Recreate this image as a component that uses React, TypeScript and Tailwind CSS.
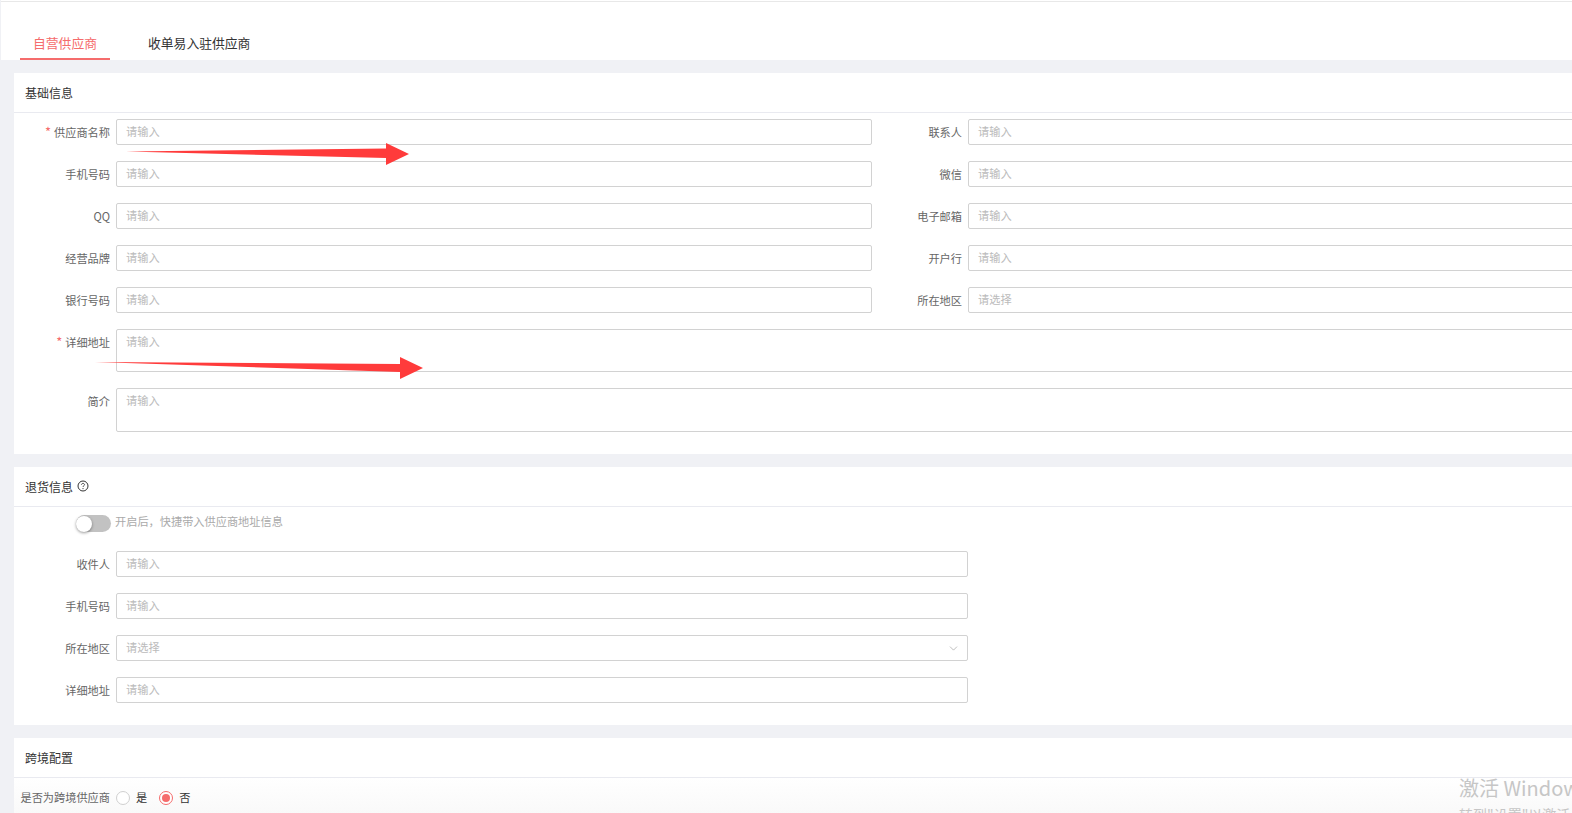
import { ChevronDown } from "lucide-react";

const font = { fontFamily: '"Noto Sans CJK SC", "Noto Sans", sans-serif' };

function Field({
  label,
  required,
  placeholder = "请输入",
  labelWidth = "w-[96px]",
  inputWidth = "w-[756px]",
  tall,
  chevron,
}: {
  label: string;
  required?: boolean;
  placeholder?: string;
  labelWidth?: string;
  inputWidth?: string;
  tall?: string;
  chevron?: boolean;
}) {
  return (
    <div className="flex items-start gap-[6px]">
      <label
        className={`${labelWidth} shrink-0 text-right text-[11.2px] leading-[26px] text-[#666]`}
      >
        {required && <span className="mr-[3px] text-[13px] text-[#f56c6c]">*</span>}
        {label}
      </label>
      <div
        className={`${inputWidth} ${tall ?? "h-[26px]"} flex items-start justify-between rounded-[2px] border border-[#d2d2d2] bg-white pl-[9px] pr-[7px] text-[11.2px] leading-[23px] text-[#bbb]`}
      >
        <span>{placeholder}</span>
        {chevron && (
          <ChevronDown size={13} strokeWidth={1} className="mt-[6px] text-[#888]" />
        )}
      </div>
    </div>
  );
}

function Card({
  title,
  help,
  className,
  children,
}: {
  title: string;
  help?: boolean;
  className?: string;
  children: React.ReactNode;
}) {
  return (
    <section className={`w-[1800px] shrink-0 bg-white ${className ?? ""}`}>
      <header className="flex h-[40px] items-center gap-[4px] border-b border-[#e9eaf0] pl-[11px] text-[12px] text-[#333]">
        {title}
        {help && (
          <svg width="12" height="12" viewBox="0 0 12 12" fill="none" className="mb-[2px]">
            <circle cx="6" cy="6" r="5" stroke="#333" />
            <path
              d="M4.5 4.8C4.5 3.9 5.2 3.4 6 3.4C6.8 3.4 7.5 3.9 7.5 4.7C7.5 5.7 6 5.8 6 7"
              stroke="#333"
              strokeWidth="0.9"
            />
            <circle cx="6" cy="8.6" r="0.6" fill="#333" />
          </svg>
        )}
      </header>
      {children}
    </section>
  );
}

export default function App() {
  const rows: [string, string, boolean?, string?][] = [
    ["供应商名称", "联系人", true],
    ["手机号码", "微信"],
    ["QQ", "电子邮箱"],
    ["经营品牌", "开户行"],
    ["银行号码", "所在地区", false, "请选择"],
  ];

  return (
    <div
      className="relative h-[813px] w-full overflow-hidden border-l border-[#f0f1f5] bg-white"
      style={font}
    >
      <div className="mt-[1px] h-[1px] bg-[#e8e8e8]" />
      <nav className="-ml-[1px] flex h-[58px] items-end bg-white pl-[20px] text-[12.8px]">
        <a className="flex h-[31px] w-[90px] items-start justify-center border-b-2 border-[#f56c6c] pt-[5px] leading-[18px] text-[#f56c6c]">
          自营供应商
        </a>
        <a className="ml-[38px] h-[31px] pt-[5px] leading-[18px] text-[#333]">收单易入驻供应商</a>
      </nav>

      <main className="-ml-[1px] flex h-[753px] flex-col gap-[13px] bg-[#f0f1f5] pl-[14px] pt-[13px]">
        <Card title="基础信息" className="h-[381px]">
          <div className="relative flex flex-col gap-[16px] pt-[6px]">
            {rows.map(([left, right, required, placeholder]) => (
              <div key={left} className="flex">
                <Field label={left} required={required} />
                <Field label={right} placeholder={placeholder} labelWidth="w-[90px]" />
              </div>
            ))}
            <Field label="详细地址" required inputWidth="w-[1608px]" tall="h-[43px]" />
            <Field label="简介" inputWidth="w-[1608px]" tall="h-[44px]" />

            <svg
              width="440"
              height="300"
              viewBox="0 0 440 300"
              className="pointer-events-none absolute left-[-14px] top-[0px]"
            >
              <path d="M126 38.5L386 35.5V30L409 41L386 52V45Z" fill="#ff3b3b" />
              <path d="M95 249L400 251V244L423 255L400 266V259Z" fill="#ff3b3b" />
            </svg>
          </div>
        </Card>

        <Card title="退货信息" help className="h-[258px]">
          <div className="flex h-[44px] items-start gap-[4px] pl-[62px] pt-[8px]">
            <div className="flex h-[17px] w-[35px] items-center rounded-full bg-[#c2c2c2]">
              <div className="h-[16px] w-[16px] rounded-full bg-white shadow-[0_1px_3px_rgba(0,0,0,0.4)]" />
            </div>
            <span className="text-[11.2px] leading-[13px] text-[#aaa]">
              开启后，快捷带入供应商地址信息
            </span>
          </div>
          <div className="flex flex-col gap-[16px]">
            <Field label="收件人" inputWidth="w-[852px]" />
            <Field label="手机号码" inputWidth="w-[852px]" />
            <Field label="所在地区" placeholder="请选择" inputWidth="w-[852px]" chevron />
            <Field label="详细地址" inputWidth="w-[852px]" />
          </div>
        </Card>

        <Card title="跨境配置" className="h-[76px]">
          <div className="flex h-[36px] items-center bg-gradient-to-b from-white to-[#f9f9f9] pl-[6px] pt-[3px] text-[11.2px] text-[#666]">
            <span className="w-[90px] text-right">是否为跨境供应商</span>
            <span className="ml-[6px] h-[14px] w-[14px] rounded-full border border-[#d0d0d0] bg-white" />
            <span className="ml-[6px] text-[#333]">是</span>
            <span className="ml-[12px] flex h-[14px] w-[14px] items-center justify-center rounded-full border border-[#f56c6c] bg-white">
              <span className="h-[8px] w-[8px] rounded-full bg-[#f56c6c]" />
            </span>
            <span className="ml-[6px] text-[#333]">否</span>
          </div>
        </Card>
      </main>

      <div className="pointer-events-none absolute left-[1458px] top-[775px] whitespace-nowrap text-[#c6c6c6]">
        <div className="text-[20px] leading-[26px]">激活 Windows</div>
        <div className="mt-[4px] text-[14px] leading-[18px]">转到"设置"以激活 Windows。</div>
      </div>
    </div>
  );
}
